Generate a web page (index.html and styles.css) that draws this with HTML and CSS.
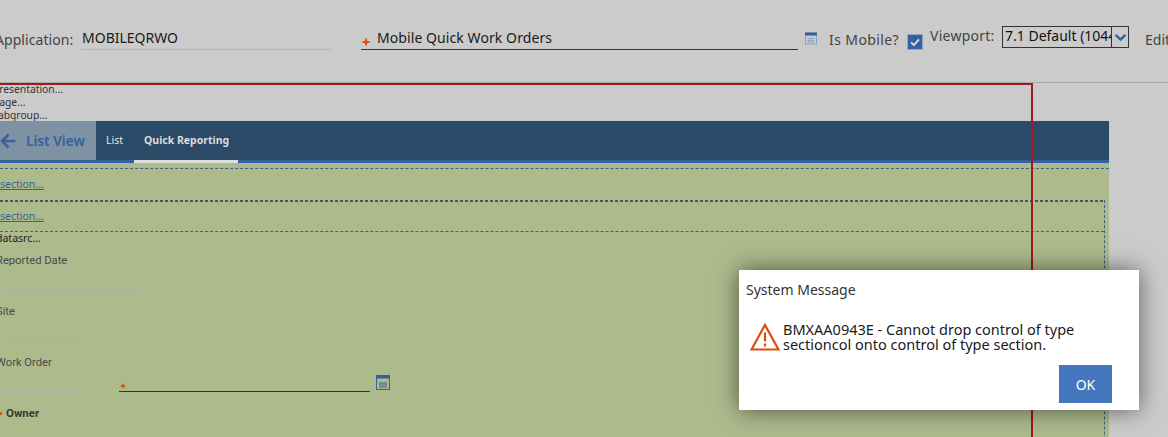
FILE: index.html
```html
<!DOCTYPE html>
<html lang="en">
<head>
<meta charset="utf-8">
<title>Application Designer</title>
<link rel="stylesheet" href="styles.css">
</head>
<body>
<div class="stage">
  <header class="topbar">
    <span class="app-label">Application:</span>
    <span class="app-field">MOBILEQRWO</span>
    <svg class="req-star" viewBox="0 0 10 10"><path d="M5 0L6.200 3.800 10 5 6.200 6.200 5 10 3.800 6.200 0 5 3.800 3.800Z"/></svg>
    <span class="desc-field">Mobile Quick Work Orders</span>
    <svg class="lookup top-lookup" viewBox="0 0 14 14"><rect x=".5" y=".5" width="13" height="13" fill="none" stroke="#7f9bc4"/><rect x="0" y="0" width="14" height="3.5" fill="#34619f"/><path d="M3 7h8M3 9.2h8M3 11.2h8" stroke="#7f9bc4" fill="none"/></svg>
    <span class="mobile-label">Is Mobile?</span>
    <span class="checkbox"><svg viewBox="0 0 16 16"><path d="M3.5 8.5L6.8 11.5 12.5 5" fill="none" stroke="#e4e8ee" stroke-width="2"/></svg></span>
    <span class="viewport-label">Viewport:</span>
    <span class="viewport-select">
      <span class="viewport-value">7.1 Default (1044</span>
      <span class="viewport-arrow"><svg viewBox="0 0 12 8"><path d="M1.5 1.5L6 6 10.500 1.500" fill="none" stroke="#34619f" stroke-width="2.200"/></svg></span>
    </span>
    <span class="edit-label">Edit</span>
  </header>

  <main class="canvas">
    <div class="palette">
      <div>Presentation...</div>
      <div>Page...</div>
      <div>Tabgroup...</div>
    </div>
    <nav class="navbar">
      <div class="back">
        <svg viewBox="0 0 16 16"><path d="M15.500 8H2M8.500 1.500L2 8l6.500 6.500" fill="none" stroke="#3a6399" stroke-width="2.600"/></svg>
        <span>List View</span>
      </div>
      <a class="tab">List</a>
      <a class="tab tab-active">Quick Reporting</a>
    </nav>
    <div class="form">
      <div class="section-outer"><a class="section-link">section...</a></div>
      <div class="section-inner">
        <div class="section-head"><a class="section-link">section...</a></div>
        <div class="section-body">
          <div class="datasrc">datasrc...</div>
          <div class="field">
            <div class="field-label">Reported Date</div>
            <div class="field-line line-long"></div>
          </div>
          <div class="field">
            <div class="field-label">Site</div>
            <div class="field-line line-short"></div>
          </div>
          <div class="field">
            <div class="field-label field-label-compact">Work Order</div>
            <div class="wo-row">
              <div class="field-line line-short line-faint"></div>
              <div class="wo-input">
                <svg class="req-star wo-star" viewBox="0 0 10 10"><path d="M5 0L6.500 3.500 10 5 6.500 6.500 5 10 3.500 6.500 0 5 3.500 3.500Z"/></svg>
              </div>
              <svg class="lookup wo-lookup" viewBox="0 0 14 15"><rect x=".5" y=".5" width="13" height="14" fill="none" stroke="#34619f"/><rect x="0" y="0" width="14" height="3.500" fill="#34619f"/><path d="M3 8h8M3 10h8M3 12h8" stroke="#34619f" fill="none"/></svg>
            </div>
          </div>
          <div class="owner"><span class="owner-mark"></span>Owner</div>
        </div>
      </div>
    </div>
  </main>

  <div class="red-frame"></div>

  <section class="dialog">
    <h2 class="dialog-title">System Message</h2>
    <div class="dialog-body">
      <svg class="warn" viewBox="0 0 30 28"><path d="M15 2L28.500 26.500H1.500Z" fill="none" stroke="#dd4a10" stroke-width="2.200"/><path d="M15 9.500v9M15 20.500v3" fill="none" stroke="#dd4a10" stroke-width="2.200"/></svg>
      <p class="dialog-text">BMXAA0943E - Cannot drop control of type sectioncol onto control of type section.</p>
    </div>
    <div class="dialog-actions"><button class="ok">OK</button></div>
  </section>
</div>
</body>
</html>
```
FILE: styles.css
```css
* { box-sizing: border-box; }
html, body { margin: 0; padding: 0; }
body {
  background: #cbcbcb;
  font-family: "Noto Sans", "Open Sans", sans-serif;
  color: #222;
  overflow: hidden;
}
.stage { position: relative; width: 1168px; height: 437px; overflow: hidden; }

/* top bar */
.topbar {
  height: 83px;
  border-bottom: 1px solid #aaaaaa;
  display: flex;
  align-items: flex-start;
  font-size: 14px;
  white-space: nowrap;
}
.topbar > * { flex: none; }
.app-label { margin: 30px 0 0 -5px; width: 86px; color: #444; line-height: 20px; letter-spacing: .06px; }
.app-field {
  width: 250px; height: 21px; margin-top: 29px; padding-left: 1px;
  line-height: 18px; color: #1a1a1a; border-bottom: 1px solid #b5b5b5;
}
.req-star { width: 10px; height: 10px; fill: #d9500f; flex: none; }
.topbar .req-star { margin: 37px 0 0 30px; }
.desc-field {
  width: 437px; height: 22px; margin: 28px 0 0 -10px; padding-left: 16px;
  line-height: 19px; color: #1a1a1a; border-bottom: 1px solid #333; letter-spacing: .08px;
}
.lookup { flex: none; display: block; }
.top-lookup { width: 12px; height: 13px; margin: 32px 0 0 7px; }
.mobile-label { margin: 30px 0 0 12px; width: 78px; line-height: 20px; color: #444; letter-spacing: .4px; }
.checkbox {
  width: 16px; height: 16px; margin-top: 34px; background: #34619f;
  border: 1px solid #8fa6c6; display: block;
}
.checkbox svg { display: block; width: 14px; height: 14px; }
.viewport-label { margin: 26px 0 0 7px; width: 72px; line-height: 20px; color: #444; letter-spacing: .25px; }
.viewport-select {
  width: 127px; height: 22px; margin-top: 26px; border: 1px solid #333;
  display: flex; color: #111; overflow: hidden;
}
.viewport-value { width: 109px; padding-left: 2px; line-height: 18px; overflow: hidden; border-right: 1px solid #333; }
.viewport-arrow { flex: 1; display: flex; align-items: center; justify-content: center; }
.viewport-arrow svg { width: 13px; height: 9px; }
.edit-label { margin: 30px 0 0 16px; line-height: 20px; color: #444; }

/* canvas */
.canvas { width: 1109px; }
.palette { height: 38px; font-size: 10.3px; line-height: 13px; color: #333; margin-left: -7px; }

.navbar {
  height: 42px;
  background: #2a4a67;
  border-bottom: 3px solid #34619f;
  display: flex;
  color: #e6e6e6;
  font-size: 10.500px;
}
.back {
  width: 96px; height: 39px; background: #7f92a3;
  display: flex; align-items: center; gap: 10px;
  color: #34619f; font-size: 13.700px; font-weight: 600;
}
.back svg { width: 16px; height: 16px; flex: none; }
.tab { height: 42px; line-height: 39px; margin-left: 10px; white-space: nowrap; }
.tab-active {
  margin-left: 11px; padding-left: 10px; width: 104px;
  font-weight: 700; color: #dcdcdc; border-bottom: 3px solid #dddddd;
}

/* form */
.form { height: 274px; background: #adba8c; padding-top: 5px; font-size: 10.500px; }
.section-outer { height: 32px; border-top: 1px dashed #3e5f8c; padding-top: 8px; }
.section-link { color: #34619f; text-decoration: underline; line-height: 14px; }
.section-inner {
  width: 1105px; height: 300px; padding-top: 2px;
  background: repeating-linear-gradient(90deg, #3f5775 0 3px, transparent 3px 5px) top left / 100% 2px no-repeat;
  border-right: 1px dashed #3e5f8c;
}
.section-head { height: 30px; padding-top: 7px; border-bottom: 1px dashed #4a5f70; }
.datasrc { margin-left: -4px; line-height: 12px; color: #222; }
.field { height: 51px; font-family: Roboto, sans-serif; }
.datasrc + .field { margin-top: 6px; }
.field-label { margin-left: -4px; line-height: 14px; height: 40px; color: #4a4a4a; font-size: 11.200px; padding-top: 4px; }
.field-label-compact { height: 24px; }
.field-line { height: 1px; background: #a9b0a8; margin-left: 2px; }
.line-long { width: 136px; }
.line-short { width: 80px; }
.line-faint { opacity: .8; flex: none; }
.wo-row { display: flex; align-items: flex-end; height: 17px; }
.wo-input {
  width: 251px; height: 16px; margin: 0 0 1px 37px; border-bottom: 1px solid #333; flex: none;
  display: flex; align-items: flex-start; padding: 7px 0 0 1px;
}
.wo-star { width: 6px; height: 6px; display: block; }
.wo-lookup { width: 14px; height: 15px; margin: 0 0 3px 6px; }
.owner { font-family: Roboto, sans-serif; font-size: 11.500px; font-weight: 700; color: #3a3a3a; line-height: 14px; padding: 3px 0 0 6px; position: relative; }
.owner-mark {
  position: absolute; left: 0; top: 9px; width: 2px; height: 3px; background: #d9500f;
}

/* overlays */
.red-frame {
  position: absolute; left: -4px; top: 83px; width: 1037px; height: 400px;
  border: 2px solid #9b1c1c;
}
.dialog {
  position: absolute; left: 739px; top: 270px; width: 400px; height: 140px;
  background: #fff;
  box-shadow: 0 0 22px rgba(0, 0, 0, .55);
  padding: 11px 7px 0;
  color: #1a1a1a;
}
.dialog-title { margin: 0; font-size: 14px; font-weight: 400; line-height: 18px; color: #333; }
.dialog-body { display: flex; margin-top: 23px; padding-left: 4px; }
.warn { width: 30px; height: 28px; flex: none; margin-top: 1px; }
.dialog-text { margin: 0 0 0 3px; font-size: 14.500px; line-height: 15px; width: 345px; }
.dialog-actions { display: flex; justify-content: flex-end; margin-top: 13px; padding-right: 20px; }
.ok {
  width: 53px; height: 38px; border: 0; padding: 0;
  background: #4477bd; color: #fff; font: inherit; font-size: 14px;
}
```
